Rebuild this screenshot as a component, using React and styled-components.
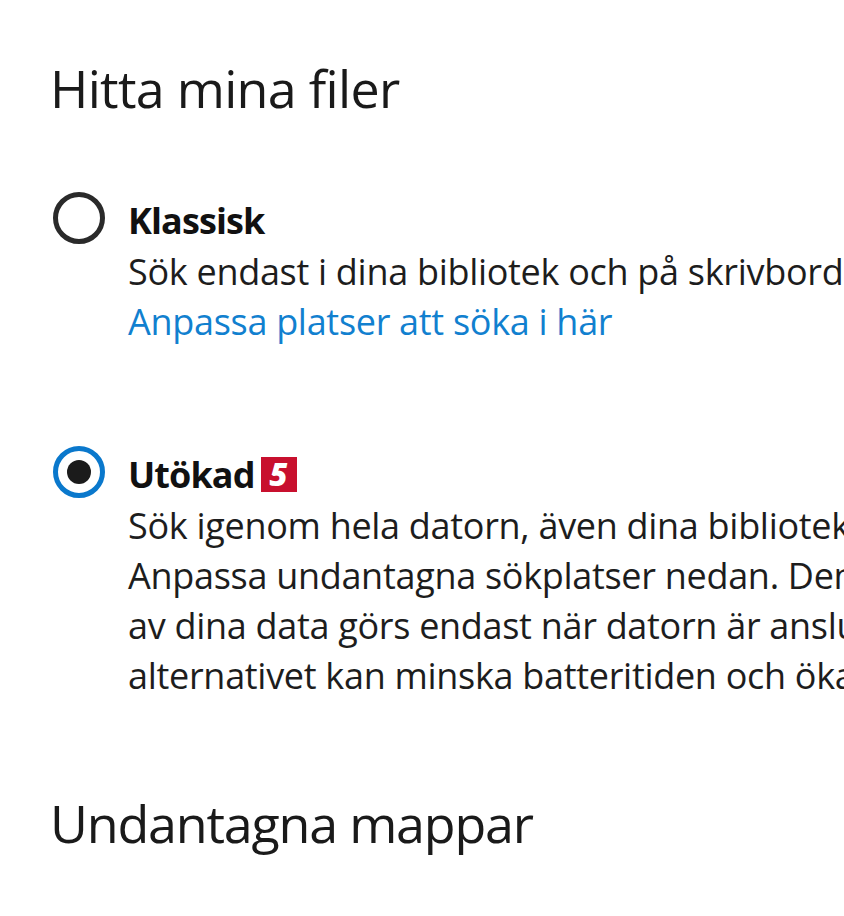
import React from "react";
import styled, { createGlobalStyle } from "styled-components";

const Global = createGlobalStyle`
  html, body { margin: 0; padding: 0; background: #ffffff; }
  body { font-family: "Open Sans", "Noto Sans", sans-serif; color: #1b1b1b; }
`;

const Page = styled.div`
  width: 844px;
  height: 916px;
  overflow: hidden;
  box-sizing: border-box;
  padding: 52px 0 0 50px;
  background: #fff;
`;

const Heading = styled.h2`
  margin: 0 0 ${(p) => p.$after || 0}px 0;
  font-size: 52px;
  font-weight: 400;
  line-height: 72px;
  letter-spacing: ${(p) => p.$track ?? -0.7}px;
  color: #1a1a1a;
  white-space: nowrap;
`;

const Option = styled.div`
  display: flex;
  align-items: flex-start;
  margin-bottom: ${(p) => p.$after || 0}px;
`;

const RadioWrap = styled.div`
  box-sizing: border-box;
  flex: 0 0 78px;
  height: 53px;
  padding: 0 0 6px 3px;
  display: flex;
  align-items: center;
`;

const Radio = styled.span`
  box-sizing: border-box;
  width: 52px;
  height: 52px;
  border-radius: 50%;
  border: 5px solid ${(p) => (p.$checked ? "#0a78cc" : "#2a2a2a")};
  display: flex;
  align-items: center;
  justify-content: center;
  &::after {
    content: "";
    display: ${(p) => (p.$checked ? "block" : "none")};
    width: 24px;
    height: 24px;
    border-radius: 50%;
    background: #1b1b1b;
  }
`;

const Body = styled.div`
  display: flex;
  flex-direction: column;
  white-space: nowrap;
`;

const Label = styled.div`
  display: flex;
  align-items: center;
  gap: 6px;
  font-size: 36px;
  font-weight: 700;
  line-height: 53px;
  letter-spacing: -0.9px;
  color: #111;
`;

const Badge = styled.span`
  display: inline-flex;
  align-items: center;
  justify-content: center;
  width: 36px;
  height: 35px;
  background: #c8102e;
  color: #fff;
  font-size: 31px;
  font-style: italic;
  font-weight: 800;
  letter-spacing: 0;
  line-height: 1;
`;

const Line = styled.div`
  font-size: 36px;
  line-height: 50px;
  letter-spacing: -0.3px;
  color: ${(p) => (p.$link ? "#1180cf" : "#1d1d1d")};
`;

export default function App() {
  return (
    <>
      <Global />
      <Page>
        <Heading $after={70}>Hitta mina filer</Heading>
        <Option $after={101}>
          <RadioWrap>
            <Radio />
          </RadioWrap>
          <Body>
            <Label>Klassisk</Label>
            <Line>Sök endast i dina bibliotek och på skrivbordet.</Line>
            <Line $link>Anpassa platser att söka i här</Line>
          </Body>
        </Option>
        <Option $after={86}>
          <RadioWrap>
            <Radio $checked />
          </RadioWrap>
          <Body>
            <Label>
              Utökad<Badge>5</Badge>
            </Label>
            <Line>Sök igenom hela datorn, även dina bibliotek och skrivbordet.</Line>
            <Line>Anpassa undantagna sökplatser nedan. Den första indexeringen</Line>
            <Line>av dina data görs endast när datorn är ansluten till ström. Det här</Line>
            <Line>alternativet kan minska batteritiden och öka CPU-användningen.</Line>
          </Body>
        </Option>
        <Heading $track={-1.2}>Undantagna mappar</Heading>
      </Page>
    </>
  );
}
